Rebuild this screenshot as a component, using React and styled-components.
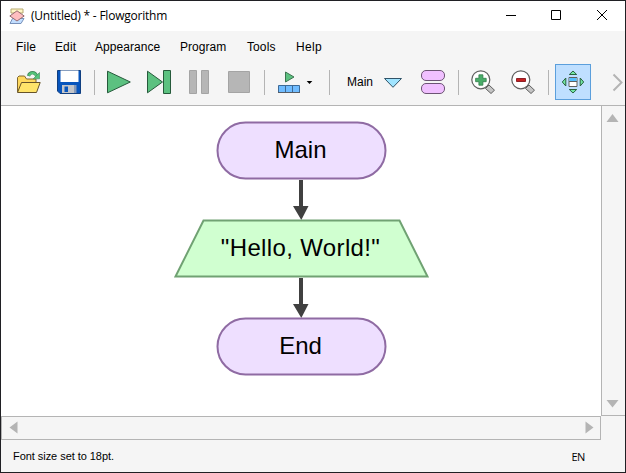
import React from "react";
import styled, { createGlobalStyle } from "styled-components";

const GlobalStyle = createGlobalStyle`
  * { box-sizing: border-box; }
  body { margin: 0; overflow: hidden; }
`;

const Window = styled.div`
  display: flex;
  flex-direction: column;
  width: 626px;
  height: 473px;
  border: 1px solid #202024;
  background: #f5f5f5;
  color: #000;
  font: 12px "Liberation Sans", Arial, sans-serif;
  overflow: hidden;
`;

const TitleBar = styled.header`
  display: flex;
  flex: 0 0 30px;
  align-items: center;
  padding-left: 7px;
  background: #fff;
`;

const Title = styled.h1`
  flex: 1;
  margin: 0 0 0 6px;
  font: 12px/16px "Open Sans", "Noto Sans", sans-serif;
  letter-spacing: -0.22px;
  white-space: nowrap;
`;

const CaptionButton = styled.button`
  width: 45px;
  height: 30px;
  padding: 0;
  border: 0;
  background: none;
  svg { display: block; }
`;

const MenuBar = styled.nav`
  display: flex;
  flex: 0 0 30px;
  align-items: center;
  gap: 19px;
  padding: 2px 0 0 15px;
`;

const MenuItem = styled.span`
  width: ${(p) => p.$width}px;
  letter-spacing: ${(p) => p.$spacing || 0}px;
  white-space: nowrap;
`;

const ToolBar = styled.div`
  display: flex;
  flex: 0 0 45px;
  align-items: flex-start;
  gap: 4px;
  padding: 3px 0 0 10px;
  border-bottom: 1px solid #b4b4b4;
`;

const ToolButton = styled.button`
  display: flex;
  flex: none;
  align-items: center;
  width: ${(p) => p.$width || 36}px;
  height: 36px;
  padding: 0;
  border: 0;
  background: ${(p) => (p.$active ? "#bfdfff" : "none")};
  box-shadow: ${(p) => (p.$active ? "inset 0 0 0 1px #5b9fdc" : "none")};
  color: #000;
  font: inherit;
  svg { display: block; flex: none; }
`;

const ButtonLabel = styled.span`
  width: 36px;
  padding-left: 11px;
`;

const Separator = styled.i`
  flex: none;
  width: 1px;
  height: 25px;
  margin: 6px 2px 0 3px;
  background: #b4b4b4;
`;

const Overflow = styled.div`
  flex: none;
  width: 12px;
  height: 36px;
  margin-left: 16px;
`;

const Workspace = styled.main`
  display: flex;
  flex: 0 0 310px;
`;

const Canvas = styled.section`
  display: flex;
  flex: 0 0 600px;
  flex-direction: column;
  align-items: center;
  padding: 15px 0 0 1px;
  background: #fff;
`;

const VerticalScroll = styled.div`
  display: flex;
  flex: 1;
  flex-direction: column;
  justify-content: space-between;
  align-items: center;
  padding: 6px 2px 4px 0;
  border: solid #b4b4b4;
  border-width: 0 0 1px 1px;
`;

const HorizontalScroll = styled.div`
  display: flex;
  flex: 0 0 24px;
  justify-content: space-between;
  align-items: center;
  width: 600px;
  padding: 0 4px 1px 6px;
  border: 1px solid #b4b4b4;
`;

const StatusBar = styled.footer`
  display: flex;
  flex: 1;
  justify-content: space-between;
  padding: 10px 40px 0 12px;
  font-size: 11px;
  line-height: 13px;
`;

const StatusText = styled.span`
  letter-spacing: -0.05px;
`;

const Language = styled.span`
  font-family: "Open Sans", "Noto Sans", sans-serif;
  font-size: 11px;
  letter-spacing: -0.4px;
`;

const Node = styled.div`
  display: grid;
  place-items: center;
  height: 59px;
  font-size: 24px;
  line-height: 28px;
  > * { grid-area: 1 / 1; }
  svg { display: block; }
`;

const NodeText = styled.span`
  z-index: 1;
  padding: 0 2px 1px 0;
  letter-spacing: ${(p) => p.$spacing || 0}px;
`;

const Terminal = ({ children }) => (
  <Node>
    <svg width="171" height="59" viewBox="0 0 171 59">
      <rect x="1.5" y="1.5" width="168" height="56" rx="28" fill="#eedfff" stroke="#8f6ba3" strokeWidth="2" />
    </svg>
    <NodeText>{children}</NodeText>
  </Node>
);

const Output = ({ children }) => (
  <Node>
    <svg width="255" height="59" viewBox="0 0 255 59">
      <path d="M29.5 1.5h196l28 56H1.5z" fill="#d0ffd0" stroke="#70a273" strokeWidth="2" />
    </svg>
    <NodeText $spacing={0.36}>{children}</NodeText>
  </Node>
);

const ConnectorArrow = styled.svg`
  display: block;
  flex: none;
  overflow: visible;
`;

const Connector = () => (
  <ConnectorArrow width="21" height="39" viewBox="0 0 21 39">
    <path d="M8 0h4v26h5.5L10.3 40 2 26h6z" fill="#404040" />
  </ConnectorArrow>
);

const Icon = ({ width = 36, children }) => (
  <svg width={width} height="36" viewBox={`0 0 ${width} 36`} fill="none">{children}</svg>
);

const AppIcon = () => (
  <svg width="17" height="17" viewBox="0 0 17 17">
    <path d="M3 1h12v4H3z" fill="#fff6c5" stroke="#b7a970" />
    <path d="M4.5 10.5H16l-3 5H2z" fill="#c2deff" stroke="#7891ba" />
    <path d="M9 2.8 16.2 8 9 13 1.8 8z" fill="#ffbec0" stroke="#966b70" />
  </svg>
);

const OpenIcon = () => (
  <Icon>
    <path d="M6.5 28V13.5l1.5-1.5h5.5l2 3H25v4" fill="#ffd95e" stroke="#80662e" />
    <path d="M6.5 28.5 10.5 18.5h18.7L25.5 28.5z" fill="#ffe46a" stroke="#66532a" />
    <path d="M17.5 12c1.2-4.5 6.7-4.8 8.3.3" stroke="#438a5b" strokeWidth="3.2" />
    <path d="M17.8 11.7c1.4-3.6 6.3-3.8 7.8.4" stroke="#54c47b" strokeWidth="2" />
    <path d="M28.5 8.5v6.3h-6.3z" fill="#54c47b" stroke="#438a5b" strokeWidth=".6" />
  </Icon>
);

const SaveIcon = () => (
  <Icon>
    <path d="M6.5 6.5h23v23H9l-2.5-2.5z" fill="#0755bd" stroke="#103f80" />
    <path d="M9.5 6.5h18v11.5h-18z" fill="#fff" />
    <path d="M11 21h12v8H11z" fill="#c3c5c9" />
    <path d="M13.5 22.5H17V28h-3.5z" fill="#0755bd" />
    <path d="M23 21h2.5v8H23z" fill="#8599b8" />
  </Icon>
);

const PlayIcon = () => (
  <Icon><path d="M6.5 7.2v21.6L29.3 18z" fill="#5cc180" stroke="#265a3b" /></Icon>
);

const StepIcon = () => (
  <Icon>
    <path d="M6.5 7.2v21.6L21.5 18zM22.5 6.5h7v23h-7z" fill="#5cc180" stroke="#265a3b" />
  </Icon>
);

const PauseIcon = () => (
  <Icon><path d="M8.5 6.5h7v23h-7zM20.5 6.5h7v23h-7z" fill="#b6b6b6" stroke="#a4a4a4" /></Icon>
);

const StopIcon = () => (
  <Icon><path d="M7.5 7.5h21v21h-21z" fill="#b6b6b6" stroke="#a4a4a4" /></Icon>
);

const SpeedIcon = () => (
  <Icon width={51}>
    <path d="M14.5 8v10l8.5-5z" fill="#5cc180" stroke="#3c7450" />
    <path d="M7.5 21.5h21v7h-21zM14.5 21.5v7M21.5 21.5v7" fill="#70bcff" stroke="#3e6a96" />
    <path d="M7 28.5h22" stroke="#565d66" />
    <path d="M35.7 17h5.6l-2.8 3z" fill="#000" />
  </Icon>
);

const DropIcon = () => (
  <Icon width={39}><path d="M12.5 14.5h17L21 23.3z" fill="#a0e4ff" stroke="#315469" /></Icon>
);

const FunctionsIcon = () => (
  <Icon>
    <rect x="6.5" y="6.5" width="23" height="10" rx="4.5" fill="#f0c0ff" stroke="#6c5474" />
    <rect x="6.5" y="19.5" width="23" height="10" rx="4.5" fill="#f0c0ff" stroke="#6c5474" />
  </Icon>
);

const ZoomIcon = ({ plus }) => (
  <Icon>
    <path d="m20.5 24.5 3.5-3.5 5.5 5.2-3.5 3.3z" fill="#c4c4c4" stroke="#606060" />
    <circle cx="15.8" cy="15.8" r="9" fill="#fff" stroke="#606060" strokeWidth="1.2" />
    {plus ? (
      <path d="M13.9 10.8h4v3.5h3.3v3.4h-3.3v3.5h-4v-3.5h-3.3v-3.4h3.3z" fill="#4aad69" stroke="#347d4b" strokeWidth=".8" />
    ) : (
      <path d="M11.5 14.5h9v3h-9z" fill="#c52020" stroke="#8e2027" />
    )}
  </Icon>
);

const FitIcon = () => (
  <Icon>
    <path d="m18 7 3.7 3.5h-7.4zM18 29l3.7-3.5h-7.4zM7.3 18l3.5-4v8zM28.7 18l-3.5-4v8z" fill="#73e7a4" stroke="#28633f" />
    <path d="M14 13.5h8v9h-8z" fill="#fff" stroke="#606060" />
    <path d="M14.5 14h7v3h-7z" fill="#52bfff" />
    <path d="M14 17.5h8" stroke="#606060" />
  </Icon>
);

const ScrollArrow = ({ direction }) => {
  const shapes = {
    up: "M.5 10 6.5 2l6 8z",
    down: "M.5 2h12l-6 7.5z",
    left: "M9.5.5v12l-8-6z",
    right: "M2.5.5v12l8-6z",
  };
  return <svg width="13" height="13" viewBox="0 0 13 13"><path d={shapes[direction]} fill="#b4b4b4" /></svg>;
};

const captions = [
  { name: "Minimize", path: "M4 15.5h10" },
  { name: "Maximize", path: "M4.5 10.5h9v9h-9z" },
  { name: "Close", path: "m5 10 10 10M15 10 5 20" },
];

const menus = [
  { label: "File", width: 20, spacing: 0.2 },
  { label: "Edit", width: 21, spacing: 0.1 },
  { label: "Appearance", width: 66, spacing: 0.05 },
  { label: "Program", width: 48, spacing: 0.05 },
  { label: "Tools", width: 30, spacing: 0.1 },
  { label: "Help", width: 27, spacing: 0.35 },
];

export default function App() {
  return (
    <>
      <GlobalStyle />
      <Window>
        <TitleBar>
          <AppIcon />
          <Title>(Untitled) * - Flowgorithm</Title>
          {captions.map((c) => (
            <CaptionButton key={c.name} aria-label={c.name}>
              <svg width="45" height="30" viewBox="-12 1 45 30" fill="none">
                <path d={c.path} stroke="#000" />
              </svg>
            </CaptionButton>
          ))}
        </TitleBar>
        <MenuBar>
          {menus.map((m) => (
            <MenuItem key={m.label} $width={m.width} $spacing={m.spacing}>{m.label}</MenuItem>
          ))}
        </MenuBar>
        <ToolBar>
          <ToolButton aria-label="Open"><OpenIcon /></ToolButton>
          <ToolButton aria-label="Save"><SaveIcon /></ToolButton>
          <Separator />
          <ToolButton aria-label="Run"><PlayIcon /></ToolButton>
          <ToolButton aria-label="Step"><StepIcon /></ToolButton>
          <ToolButton aria-label="Pause"><PauseIcon /></ToolButton>
          <ToolButton aria-label="Stop"><StopIcon /></ToolButton>
          <Separator />
          <ToolButton aria-label="Speed" $width={51}><SpeedIcon /></ToolButton>
          <Separator />
          <ToolButton $width={75}><ButtonLabel>Main</ButtonLabel><DropIcon /></ToolButton>
          <ToolButton aria-label="Functions"><FunctionsIcon /></ToolButton>
          <Separator />
          <ToolButton aria-label="Zoom in"><ZoomIcon plus /></ToolButton>
          <ToolButton aria-label="Zoom out"><ZoomIcon /></ToolButton>
          <Separator />
          <ToolButton aria-label="Fit window" $active><FitIcon /></ToolButton>
          <Overflow>
            <svg width="12" height="36" viewBox="0 0 12 36" fill="none">
              <path d="m2.5 10.5 8 8-8 8" stroke="#b4b4b4" strokeWidth="2" />
            </svg>
          </Overflow>
        </ToolBar>
        <Workspace>
          <Canvas>
            <Terminal>Main</Terminal>
            <Connector />
            <Output>"Hello, World!"</Output>
            <Connector />
            <Terminal>End</Terminal>
          </Canvas>
          <VerticalScroll>
            <ScrollArrow direction="up" />
            <ScrollArrow direction="down" />
          </VerticalScroll>
        </Workspace>
        <HorizontalScroll>
          <ScrollArrow direction="left" />
          <ScrollArrow direction="right" />
        </HorizontalScroll>
        <StatusBar>
          <StatusText>Font size set to 18pt.</StatusText>
          <Language>EN</Language>
        </StatusBar>
      </Window>
    </>
  );
}
